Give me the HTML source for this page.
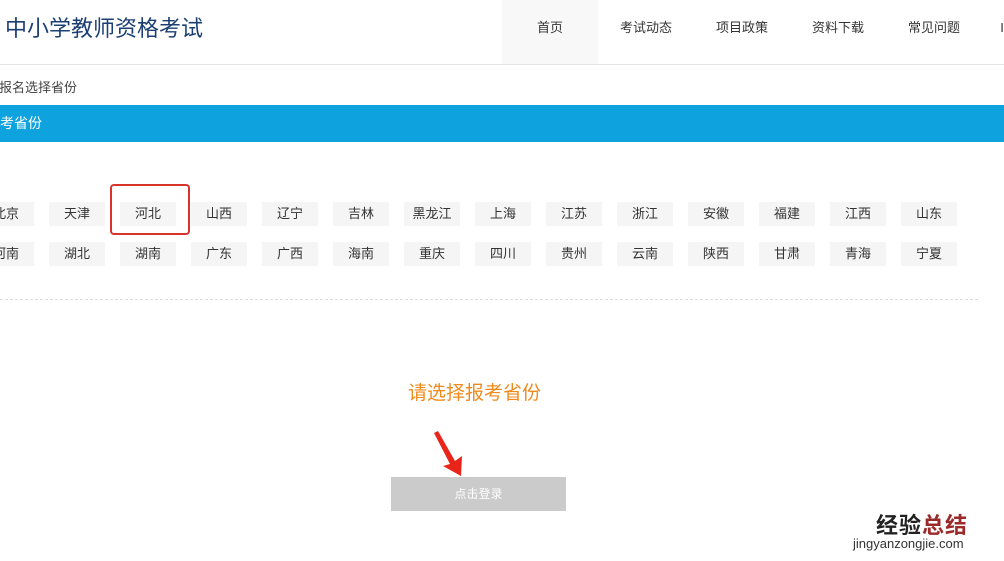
<!DOCTYPE html>
<html><head><meta charset="utf-8"><style>
*{margin:0;padding:0;box-sizing:border-box}
body{width:1004px;height:561px;overflow:hidden;background:#fff;font-family:"Liberation Sans","Noto Sans CJK SC",sans-serif;position:relative}
.a{position:absolute;white-space:nowrap}
.nav{top:0;height:64px;width:96px;line-height:56px;text-align:center;font-size:13px;color:#333}
.b{width:56px;height:24px;line-height:24px;text-align:center;background:#f5f5f5;font-size:13px;color:#333}
</style></head><body>
<div class="a" style="left:5px;top:11px;font-size:22px;color:#1c3f73;font-weight:normal">中小学教师资格考试</div>
<div class="a nav" style="left:502px;background:#f8f8f8">首页</div>
<div class="a nav" style="left:598px">考试动态</div>
<div class="a nav" style="left:694px">项目政策</div>
<div class="a nav" style="left:790px">资料下载</div>
<div class="a nav" style="left:886px">常见问题</div>
<div class="a nav" style="left:982px;width:40px">I</div>
<div class="a" style="left:0;top:64px;width:1004px;height:1px;background:#e5e5e5"></div>
<div class="a" style="left:-1px;top:77px;font-size:13px;color:#444">报名选择省份</div>
<div class="a" style="left:0;top:105px;width:1004px;height:37px;background:#0ea3df;color:#fff;font-size:14px;line-height:37px;padding-left:0">考省份</div>
<div id="g"></div>
<div class="a" style="left:110px;top:184px;width:80px;height:51px;border:2px solid #d9342b;border-radius:4px"></div>
<div class="a" style="left:0;top:299px;width:978px;border-top:1px dashed #ddd"></div>
<div class="a" style="left:408px;top:378px;font-size:19px;color:#ef8a1c">请选择报考省份</div>
<svg class="a" style="left:430px;top:428px" width="40" height="52"><polygon points="4,5 8,3 25,33 32,28 31,48 13,38 20,36" fill="#e8241b"/></svg>
<div class="a" style="left:391px;top:477px;width:175px;height:34px;background:#cbcbcb;color:#fff;font-size:12px;line-height:34px;text-align:center">点击登录</div>
<div class="a" style="left:876px;top:508px;font-size:22px;font-weight:bold;color:#222;letter-spacing:1px">经验<span style="color:#9b2a2a">总结</span></div>
<div class="a" style="left:853px;top:536px;font-size:13px;color:#333">jingyanzongjie.com</div>
<script>
var r1="北京 天津 河北 山西 辽宁 吉林 黑龙江 上海 江苏 浙江 安徽 福建 江西 山东".split(" "),r2="河南 湖北 湖南 广东 广西 海南 重庆 四川 贵州 云南 陕西 甘肃 青海 宁夏".split(" "),h="";
[r1,r2].forEach(function(r,j){r.forEach(function(t,i){h+='<div class="a b" style="left:'+(-22+71*i)+'px;top:'+(202+40*j)+'px">'+t+'</div>'})});
document.getElementById("g").innerHTML=h;
</script>
</body></html>
